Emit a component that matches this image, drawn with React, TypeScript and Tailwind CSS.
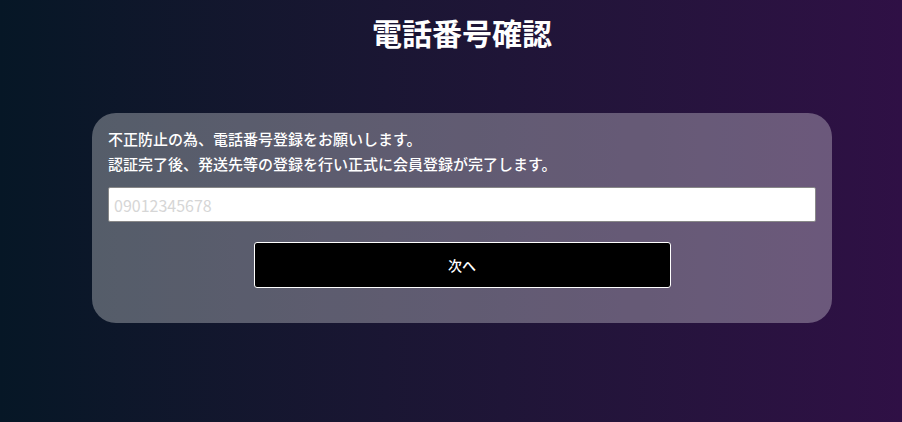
import React from "react";

export default function App() {
  return (
    <div
      className="w-[902px] h-[422px] overflow-hidden bg-gradient-to-r from-[#061726] to-[#2f1045] text-white"
      style={{ fontFamily: '"Noto Sans CJK JP", "Noto Sans", sans-serif' }}
    >
      <div className="pl-[22px]">
        <h1 className="pt-[10px] text-center text-[30px] font-bold leading-[44px]">電話番号確認</h1>
        <div className="mx-auto mt-[59px] w-[740px] rounded-[24px] bg-white/30 px-[16px] pt-[13px] pb-[35px]">
          <p className="text-[15px] font-medium leading-[25px]">不正防止の為、電話番号登録をお願いします。</p>
          <p className="text-[15px] font-medium leading-[25px]">認証完了後、発送先等の登録を行い正式に会員登録が完了します。</p>
          <input
            className="mt-[11px] block h-[35px] w-full rounded-[2px] border border-[#888] bg-white px-[5px] text-[16px] text-black placeholder:text-[#d6d6d6] outline-none"
            placeholder="09012345678"
          />
          <button className="mx-auto mt-[20px] flex h-[46px] w-[417px] items-center justify-center rounded-[3px] border border-white bg-black text-[14px] font-medium text-white">
            次へ
          </button>
        </div>
      </div>
    </div>
  );
}
